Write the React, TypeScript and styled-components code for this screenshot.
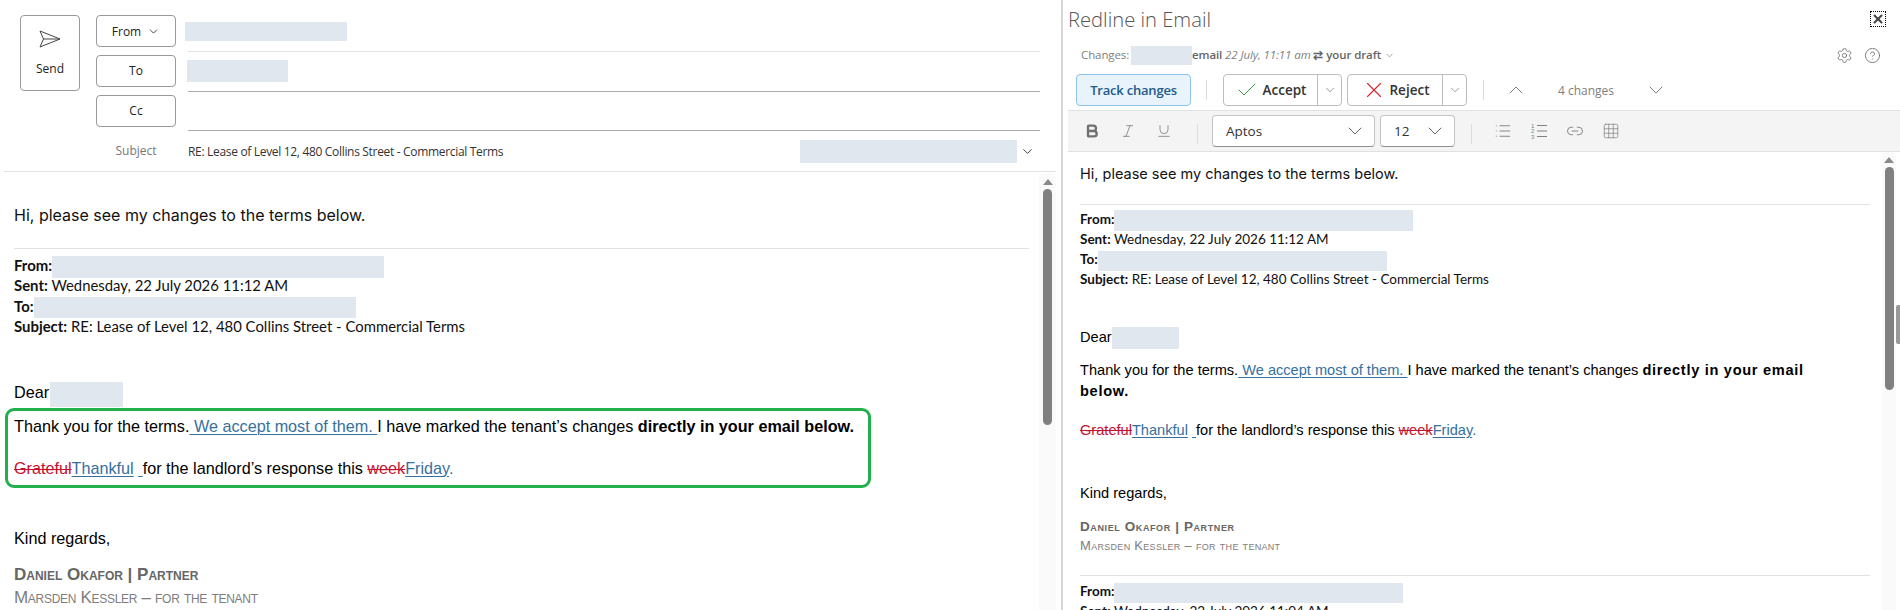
import React from "react";
import styled, { createGlobalStyle } from "styled-components";
import { Settings, CircleHelp, Check, X, ChevronDown, ChevronUp, Bold, Italic, Underline, List, Link2, Grid3x3 } from "lucide-react";

const Global = createGlobalStyle`
  html, body { margin: 0; padding: 0; background: #fff; }
  body { font-family: "Liberation Sans", Arial, sans-serif; color: #000; overflow: hidden; }
  * { box-sizing: border-box; }
`;

const Page = styled.div`
  display: flex;
  width: 1900px;
  height: 610px;
  overflow: hidden;
  background: #fff;
`;

/* ---------- left compose pane ---------- */
const ComposePane = styled.section`
  width: 1061px;
  flex: none;
  display: flex;
  flex-direction: column;
  height: 100%;
`;
const ComposeHeader = styled.header`
  flex: none;
  height: 172px;
  margin: 0 5px 0 4px;
  padding: 12px 16px 0;
  display: flex;
  border-bottom: 1px solid #e2e2e2;
`;
const SendButton = styled.button`
  width: 60px;
  height: 76px;
  margin: 3px 16px 0 0;
  padding: 14px 0 0;
  flex: none;
  border: 1px solid #9a9a9a;
  border-radius: 4px;
  background: #fff;
  display: flex;
  flex-direction: column;
  align-items: center;
  gap: 12px;
  font: 12px "Open Sans", sans-serif;
  color: #222;
`;
const Fields = styled.div`
  flex: 1;
  display: flex;
  flex-direction: column;
`;
const FieldRow = styled.div`
  display: flex;
  height: 40px;
`;
const AddressButton = styled.button`
  width: 80px;
  height: 32px;
  margin: 3px 12px 0 0;
  padding: 0;
  flex: none;
  border: 1px solid #9a9a9a;
  border-radius: 4px;
  background: #fff;
  display: flex;
  align-items: center;
  justify-content: center;
  gap: 6px;
  font: 12px "Open Sans", sans-serif;
  color: #222;
`;
const FieldValue = styled.div<{ $light?: boolean }>`
  flex: 1;
  display: flex;
  align-items: center;
  border-bottom: 1px solid ${(p) => (p.$light ? "#e2e2e2" : "#ababab")};
`;
const Redaction = styled.span<{ $w: number; $h: number; $shift?: number }>`
  display: inline-block;
  flex: none;
  width: ${(p) => p.$w}px;
  height: ${(p) => p.$h}px;
  margin-left: ${(p) => p.$shift ?? 0}px;
  background: #e1e7ef;
  vertical-align: middle;
`;
const SubjectLabel = styled.div`
  width: 80px;
  margin-right: 12px;
  flex: none;
  text-align: center;
  font: 12px/39px "Open Sans", sans-serif;
  color: #777;
`;
const SubjectValue = styled.div`
  flex: 1;
  display: flex;
  align-items: center;
  justify-content: space-between;
  padding-right: 5px;
  font: 12px "Open Sans", sans-serif;
  color: #333;
  letter-spacing: -0.32px;
`;
const SubjectMeta = styled.div`
  display: flex;
  align-items: center;
  gap: 3px;
`;

const BodyFrame = styled.div`
  flex: 1;
  min-height: 0;
  display: flex;
  overflow: hidden;
`;
const ComposeBody = styled.div`
  flex: 1;
  min-width: 0;
  padding: 0 10px 0 14px;
  overflow: hidden;
`;
const ScrollTrack = styled.div<{ $w: number; $thumb: number; $pad: number }>`
  flex: none;
  width: ${(p) => p.$w}px;
  background: #fafafa;
  border-radius: 6px 6px 0 0;
  padding-top: ${(p) => p.$pad}px;
  display: flex;
  flex-direction: column;
  align-items: center;
  gap: 4px;
  &::before {
    content: "";
    width: 0;
    height: 0;
    border-left: 5px solid transparent;
    border-right: 5px solid transparent;
    border-bottom: 6px solid #8a8a8a;
  }
  &::after {
    content: "";
    width: 9px;
    height: ${(p) => p.$thumb}px;
    border-radius: 5px;
    background: #808080;
  }
`;
const ComposeTrackWrap = styled.div`
  flex: none;
  margin: 1px 5px 0 0;
  display: flex;
`;

const Greeting = styled.p<{ $small?: boolean; $top: number }>`
  margin: ${(p) => p.$top}px 0 0;
  font: ${(p) => (p.$small ? "14.5px/20px" : "16px/20px")} Inter, sans-serif;
  color: #111;
`;
const Rule = styled.hr<{ $top: number }>`
  margin: ${(p) => p.$top}px 0 0;
  border: 0;
  height: 1px;
  background: #e2e2e2;
`;
const MailMeta = styled.div<{ $small?: boolean; $top: number }>`
  margin-top: ${(p) => p.$top}px;
  font: ${(p) => (p.$small ? "13.5px/20px" : "14.9px/20.33px")} Lato, sans-serif;
  color: #111;
  b { font-weight: 700; }
`;
const MetaLine = styled.div`
  white-space: nowrap;
  overflow: visible;
  height: 1lh;
`;
const Para = styled.p<{ $top: number; $h: number; $size: number }>`
  margin: ${(p) => p.$top}px 0 0;
  font-size: ${(p) => p.$size}px;
  line-height: ${(p) => p.$h}px;
  color: #000;
`;
const Added = styled.span`
  color: #36709f;
  text-decoration: underline;
  text-underline-offset: 2px;
  text-decoration-thickness: 1px;
`;
const AddedTail = styled.span`
  color: #36709f;
`;
const Removed = styled.span`
  color: #c4122f;
  text-decoration: line-through;
  text-decoration-thickness: 1px;
`;
const Strong = styled.b<{ $wide?: boolean }>`
  font-weight: 700;
  letter-spacing: ${(p) => (p.$wide ? "0.7px" : "0")};
`;
const Highlight = styled.div`
  width: 866px;
  height: 80px;
  margin: 1px 0 0 -9px;
  padding: 5px 0 0 6px;
  border: 3px solid #21b04b;
  border-radius: 9px;
`;
const SigName = styled.div<{ $small?: boolean; $top: number }>`
  margin-top: ${(p) => p.$top}px;
  font: 700 ${(p) => (p.$small ? "13.5px/20px" : "17px/20px")} "Liberation Sans", sans-serif;
  font-variant: small-caps;
  letter-spacing: ${(p) => (p.$small ? "0.6px" : "0")};
  color: #666;
`;
const SigFirm = styled.div<{ $small?: boolean; $top: number }>`
  margin-top: ${(p) => p.$top}px;
  font: ${(p) => (p.$small ? "13px/20px" : "17px/20px")} "Liberation Sans", sans-serif;
  font-variant: small-caps;
  letter-spacing: ${(p) => (p.$small ? "0.3px" : "-0.3px")};
  color: #7d7d7d;
`;

/* ---------- right pane ---------- */
const RedlinePane = styled.aside`
  flex: 1;
  min-width: 0;
  border-left: 2px solid #d6d6d6;
  display: flex;
  flex-direction: column;
  height: 100%;
`;
const TitleBar = styled.div`
  flex: none;
  height: 38px;
  display: flex;
  align-items: center;
  justify-content: space-between;
  padding: 0 14px 0 5px;
`;
const Title = styled.h1`
  margin: 0;
  font: 300 20.2px "Open Sans", sans-serif;
  color: #555;
`;
const CloseBox = styled.button`
  width: 16px;
  height: 16px;
  padding: 0;
  border: 1px dotted #000;
  background: #fff;
  display: flex;
  align-items: center;
  justify-content: center;
  color: #444;
`;
const ChangesBar = styled.div`
  flex: none;
  height: 34px;
  padding: 0 19px 0 18px;
  display: flex;
  align-items: center;
  justify-content: space-between;
  font: 11.5px "Open Sans", sans-serif;
  color: #808080;
`;
const ChangesSummary = styled.div`
  white-space: pre;
  letter-spacing: -0.1px;
  b { font-weight: 600; color: #666; }
  i { color: #808080; }
  svg { vertical-align: middle; }
`;
const HelpIcons = styled.div`
  display: flex;
  gap: 11px;
  color: #707070;
`;
const ActionBar = styled.div`
  flex: none;
  height: 38px;
  padding: 2px 0 0 13px;
  display: flex;
  align-items: flex-start;
`;
const TrackButton = styled.button`
  width: 115px;
  height: 32px;
  padding: 0;
  border: 1px solid #8cc4ea;
  border-radius: 4px;
  background: #e8f3fb;
  font: 600 13px "Open Sans", sans-serif;
  color: #22598a;
  letter-spacing: -0.2px;
`;
const Divider = styled.span<{ $l: number; $r: number }>`
  flex: none;
  width: 1px;
  height: 20px;
  margin: 6px ${(p) => p.$r}px 0 ${(p) => p.$l}px;
  background: #dcdcdc;
`;
const Split = styled.div<{ $gap?: number }>`
  display: flex;
  height: 32px;
  margin-right: ${(p) => p.$gap ?? 0}px;
  border: 1px solid #bdbdbd;
  border-radius: 4px;
  background: #fff;
`;
const SplitMain = styled.button<{ $w: number; $gap: number }>`
  width: ${(p) => p.$w}px;
  padding: 0;
  border: 0;
  border-right: 1px solid #bdbdbd;
  background: none;
  display: flex;
  align-items: center;
  justify-content: center;
  gap: ${(p) => p.$gap}px;
  font: 600 13.5px "Open Sans", sans-serif;
  color: #333;
`;
const SplitCaret = styled.button`
  width: 23px;
  padding: 0;
  border: 0;
  background: none;
  display: flex;
  align-items: center;
  justify-content: center;
  color: #777;
`;
const NavGroup = styled.div`
  height: 32px;
  display: flex;
  align-items: center;
  margin-left: 20px;
  color: #808080;
`;
const NavCount = styled.span`
  width: 116px;
  text-align: center;
  font: 12px "Open Sans", sans-serif;
  color: #808080;
`;
const FormatBar = styled.div`
  flex: none;
  height: 42px;
  margin: 0 0 0 5px;
  padding: 0 0 0 16px;
  display: flex;
  align-items: center;
  background: #f4f4f4;
  border-top: 1px solid #e1e1e1;
  border-bottom: 1px solid #e1e1e1;
  color: #808080;
`;
const FormatGroup = styled.div<{ $gap: number }>`
  display: flex;
  align-items: center;
  gap: ${(p) => p.$gap}px;
`;
const BoldMark = styled(Bold)`
  color: #707070;
`;
const Select = styled.div<{ $w: number; $gap?: number }>`
  width: ${(p) => p.$w}px;
  height: 32px;
  flex: none;
  margin-right: ${(p) => p.$gap ?? 0}px;
  padding: 0 7px 0 13px;
  border: 1px solid #c4c4c4;
  border-bottom-color: #8d8d8d;
  border-radius: 4px;
  background: #fff;
  display: flex;
  align-items: center;
  justify-content: space-between;
  font: 13.5px "Open Sans", sans-serif;
  color: #333;
`;
const RedlineBody = styled.div`
  flex: 1;
  min-width: 0;
  padding: 0 12px 0 17px;
  overflow: hidden;
`;
const RedlineTrackWrap = styled.div`
  flex: none;
  display: flex;
`;
const OuterRail = styled.div`
  flex: none;
  width: 4px;
  padding-top: 153px;
  &::after {
    content: "";
    display: block;
    height: 39px;
    background: #999;
    border-radius: 2px 0 0 2px;
  }
`;

/* ---------- drawn icons ---------- */
const SendIcon = () => (
  <svg width="22" height="18" viewBox="0 0 22 18" fill="none" stroke="#444" strokeWidth="1">
    <path d="M1 1 L21 9 L1 17 L4.5 9 Z M4.5 9 H21" strokeLinejoin="round" />
  </svg>
);
const NumberedIcon = () => (
  <svg width="18" height="18" viewBox="0 0 18 18" fill="none" stroke="#808080" strokeWidth="1">
    <text x="1" y="5.5" fontSize="6" fontFamily="Liberation Sans" fill="#808080" stroke="none">1</text>
    <text x="1" y="11" fontSize="6" fontFamily="Liberation Sans" fill="#808080" stroke="none">2</text>
    <text x="1" y="16.5" fontSize="6" fontFamily="Liberation Sans" fill="#808080" stroke="none">3</text>
    <path d="M7 3.5 H17 M7 9 H17 M7 14.5 H17" />
  </svg>
);

const MailHeaderBlock = ({ small, top }: { small?: boolean; top: number }) => (
  <MailMeta $small={small} $top={top}>
    <MetaLine><b>From:</b><Redaction $w={small ? 299 : 332} $h={small ? 21 : 22} /></MetaLine>
    <MetaLine><b>Sent:</b> Wednesday, 22 July 2026 11:12 AM</MetaLine>
    <MetaLine><b>To:</b><Redaction $w={small ? 289 : 322} $h={small ? 20 : 21} /></MetaLine>
    <MetaLine><b>Subject:</b> RE: Lease of Level 12, 480 Collins Street - Commercial Terms</MetaLine>
  </MailMeta>
);

const Tracked = () => (
  <>
    <Removed>Grateful</Removed><Added>Thankful</Added> <Added>&nbsp;</Added>for the landlord’s response this <Removed>week</Removed><Added>Friday</Added><AddedTail>.</AddedTail>
  </>
);

export default function App() {
  return (
    <Page>
      <Global />
      <ComposePane>
        <ComposeHeader>
          <SendButton><SendIcon />Send</SendButton>
          <Fields>
            <FieldRow>
              <AddressButton>From <ChevronDown size={13} strokeWidth={1.5} /></AddressButton>
              <FieldValue $light><Redaction $w={162} $h={19} $shift={-3} /></FieldValue>
            </FieldRow>
            <FieldRow>
              <AddressButton>To</AddressButton>
              <FieldValue><Redaction $w={101} $h={22} $shift={-1} /></FieldValue>
            </FieldRow>
            <FieldRow>
              <AddressButton>Cc</AddressButton>
              <FieldValue />
            </FieldRow>
            <FieldRow>
              <SubjectLabel>Subject</SubjectLabel>
              <SubjectValue>
                RE: Lease of Level 12, 480 Collins Street - Commercial Terms
                <SubjectMeta>
                  <Redaction $w={217} $h={23} />
                  <ChevronDown size={15} strokeWidth={1.5} color="#333" />
                </SubjectMeta>
              </SubjectValue>
            </FieldRow>
          </Fields>
        </ComposeHeader>
        <BodyFrame>
          <ComposeBody>
            <Greeting $top={33}>Hi, please see my changes to the terms below.</Greeting>
            <Rule $top={23} />
            <MailHeaderBlock top={6} />
            <Para $top={43} $h={26} $size={16.2}>Dear<Redaction $w={73} $h={25} $shift={1} /></Para>
            <Highlight>
              <Para $top={0} $h={20} $size={16.2}>
                Thank you for the terms.<Added> We accept most of them. </Added>I have marked the tenant’s changes <Strong>directly in your email below.</Strong>
              </Para>
              <Para $top={22} $h={20} $size={16.2}><Tracked /></Para>
            </Highlight>
            <Para $top={40} $h={20} $size={16.2}>Kind regards,</Para>
            <SigName $top={17}>Daniel Okafor | Partner</SigName>
            <SigFirm $top={3}>Marsden Kessler – for the tenant</SigFirm>
          </ComposeBody>
          <ComposeTrackWrap><ScrollTrack $w={17} $thumb={236} $pad={6} /></ComposeTrackWrap>
        </BodyFrame>
      </ComposePane>

      <RedlinePane>
        <TitleBar>
          <Title>Redline in Email</Title>
          <CloseBox><X size={14} strokeWidth={3.5} /></CloseBox>
        </TitleBar>
        <ChangesBar>
          <ChangesSummary>
            Changes: <Redaction $w={61} $h={19} $shift={-1} /><b>email</b> <i>22 July, 11:11 am</i> <b>⇄ your draft</b> <ChevronDown size={11} strokeWidth={1.5} />
          </ChangesSummary>
          <HelpIcons>
            <Settings size={17} strokeWidth={1.25} />
            <CircleHelp size={17} strokeWidth={1.25} />
          </HelpIcons>
        </ChangesBar>
        <ActionBar>
          <TrackButton>Track changes</TrackButton>
          <Divider $l={15} $r={16} />
          <Split $gap={5}>
            <SplitMain $w={94} $gap={4}><Check size={24} strokeWidth={1} color="#2f9e44" />Accept</SplitMain>
            <SplitCaret><ChevronDown size={14} strokeWidth={1.25} /></SplitCaret>
          </Split>
          <Split>
            <SplitMain $w={95} $gap={3}><X size={26} strokeWidth={1} color="#d1242f" />Reject</SplitMain>
            <SplitCaret><ChevronDown size={14} strokeWidth={1.25} /></SplitCaret>
          </Split>
          <Divider $l={16} $r={0} />
          <NavGroup>
            <ChevronUp size={24} strokeWidth={1} />
            <NavCount>4 changes</NavCount>
            <ChevronDown size={24} strokeWidth={1} />
          </NavGroup>
        </ActionBar>
        <FormatBar>
          <FormatGroup $gap={20}>
            <BoldMark size={16} strokeWidth={3.5} />
            <Italic size={16} strokeWidth={1.25} />
            <Underline size={16} strokeWidth={1.25} />
          </FormatGroup>
          <Divider $l={25} $r={14} />
          <Select $w={163} $gap={5}>Aptos <ChevronDown size={24} strokeWidth={1} color="#666" /></Select>
          <Select $w={75}>12 <ChevronDown size={24} strokeWidth={1} color="#666" /></Select>
          <Divider $l={16} $r={22} />
          <FormatGroup $gap={18}>
            <List size={18} strokeWidth={1.25} />
            <NumberedIcon />
            <Link2 size={18} strokeWidth={1.25} />
            <Grid3x3 size={18} strokeWidth={1} />
          </FormatGroup>
        </FormatBar>
        <BodyFrame>
          <RedlineBody>
            <Greeting $small $top={12}>Hi, please see my changes to the terms below.</Greeting>
            <Rule $top={20} />
            <MailHeaderBlock small top={4} />
            <Para $top={37} $h={22} $size={14.6}>Dear<Redaction $w={67} $h={22} /></Para>
            <Para $top={11} $h={21} $size={14.6}>
              Thank you for the terms.<Added> We accept most of them. </Added>I have marked the tenant’s changes <Strong $wide>directly in your email<br />below.</Strong>
            </Para>
            <Para $top={18} $h={21} $size={14.6}><Tracked /></Para>
            <Para $top={42} $h={20} $size={14.6}>Kind regards,</Para>
            <SigName $small $top={14}>Daniel Okafor | Partner</SigName>
            <SigFirm $small $top={-1}>Marsden Kessler – for the tenant</SigFirm>
            <Rule $top={19} />
            <MailMeta $small $top={5}>
              <MetaLine><b>From:</b><Redaction $w={289} $h={20} /></MetaLine>
              <MetaLine><b>Sent:</b> Wednesday, 22 July 2026 11:04 AM</MetaLine>
            </MailMeta>
          </RedlineBody>
          <RedlineTrackWrap><ScrollTrack $w={14} $thumb={223} $pad={5} /></RedlineTrackWrap>
          <OuterRail />
        </BodyFrame>
      </RedlinePane>
    </Page>
  );
}
